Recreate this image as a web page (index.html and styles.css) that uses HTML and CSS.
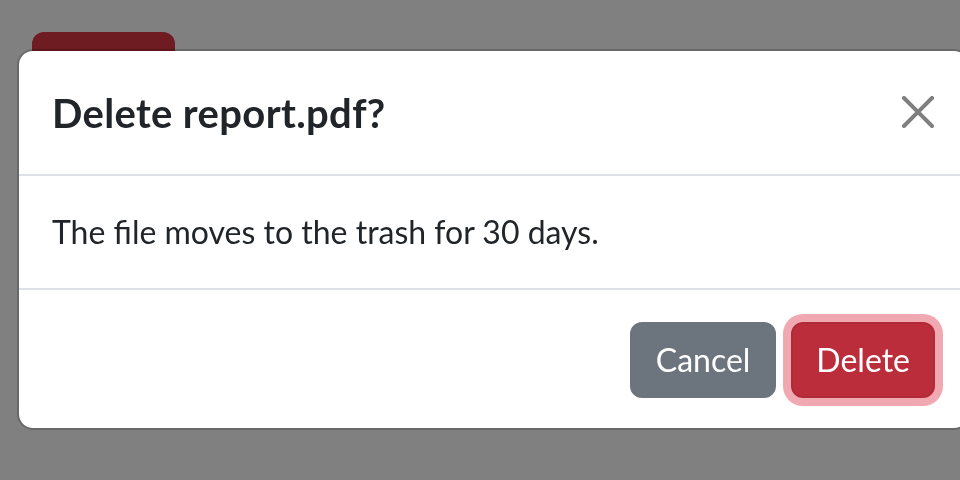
FILE: index.html
```html
<!DOCTYPE html>
<html lang="en">
<head>
<meta charset="utf-8">
<title>Delete report.pdf?</title>
<link rel="stylesheet" href="styles.css">
</head>
<body>
<div class="page">
  <button class="btn-trigger" type="button">Delete</button>
</div>
<div class="overlay">
  <div class="modal" role="dialog" aria-labelledby="modal-title">
    <div class="modal-header">
      <h5 class="modal-title" id="modal-title">Delete report.pdf?</h5>
      <button class="btn-close" type="button" aria-label="Close">
        <svg viewBox="0 0 16 16" width="32" height="32" aria-hidden="true"><path d="M.293.293a1 1 0 0 1 1.414 0L8 6.586 14.293.293a1 1 0 1 1 1.414 1.414L9.414 8l6.293 6.293a1 1 0 0 1-1.414 1.414L8 9.414l-6.293 6.293a1 1 0 0 1-1.414-1.414L6.586 8 .293 1.707a1 1 0 0 1 0-1.414z"/></svg>
      </button>
    </div>
    <div class="modal-body">
      <p>The file moves to the trash for 30 days.</p>
    </div>
    <div class="modal-footer">
      <button class="btn btn-secondary" type="button">Cancel</button>
      <button class="btn btn-danger" type="button">Delete</button>
    </div>
  </div>
</div>
</body>
</html>
```

FILE: styles.css
```css
html, body {
  margin: 0;
  padding: 0;
  height: 100%;
}
body {
  background: #808080;
  font-family: Lato, "Noto Sans", sans-serif;
  color: #212529;
  overflow: hidden;
}
.page {
  padding: 32px;
}
.btn-trigger {
  width: 143px;
  height: 76px;
  border: 0;
  border-radius: 12px;
  background: #6e1b22;
  color: transparent;
  font: inherit;
}
.overlay {
  position: fixed;
  inset: 0;
  padding: 49px 0 0 17px;
}
.modal {
  width: 953px;
  box-sizing: border-box;
  background: #fff;
  border: 2px solid rgba(0, 0, 0, 0.175);
  border-radius: 16px;
  background-clip: padding-box;
}
.modal-header {
  display: flex;
  align-items: center;
  justify-content: space-between;
  padding: 32px 32px 31px 33px;
  border-bottom: 2px solid #dee2e6;
}
.modal-title {
  margin: 0;
  font-size: 40px;
  line-height: 60px;
  font-weight: 700;
  letter-spacing: 0.35px;
}
.btn-close {
  display: flex;
  padding: 0;
  margin: -2px 2px 0 0;
  border: 0;
  background: none;
  fill: #7f7f7f;
}
.modal-body {
  padding: 32px 32px 32px 33px;
  border-bottom: 2px solid #dee2e6;
}
.modal-body p {
  margin: 0;
  font-size: 32px;
  line-height: 48px;
}
.modal-footer {
  display: flex;
  justify-content: flex-end;
  gap: 15px;
  padding: 32px 33px 30px 32px;
}
.btn {
  height: 76px;
  padding: 0 24px;
  border: 2px solid transparent;
  border-radius: 12px;
  font-family: inherit;
  font-size: 32px;
  line-height: 48px;
  color: #fff;
}
.btn-secondary {
  background: #6c757d;
  border-color: #6c757d;
}
.btn-danger {
  padding: 0 23px;
  background: #bb2d3b;
  border-color: #b02a37;
  box-shadow: 0 0 0 8px rgba(225, 83, 97, 0.5);
}
```
